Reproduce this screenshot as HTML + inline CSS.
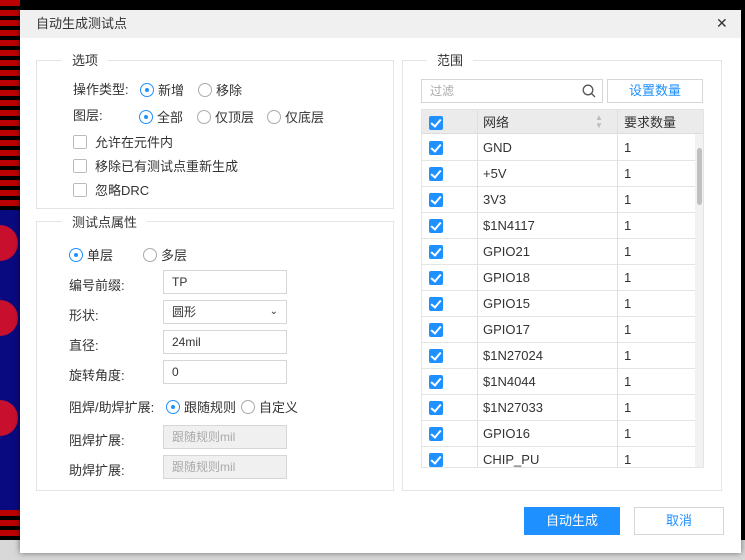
<!DOCTYPE html>
<html><head><meta charset="utf-8"><style>
*{box-sizing:border-box;margin:0;padding:0}
body{width:745px;height:560px;position:relative;overflow:hidden;background:#000;font-family:"Liberation Sans","Noto Sans CJK SC",sans-serif;font-size:13px;color:#333;line-height:15px}
.a{position:absolute}
.dlg{left:20px;top:10px;width:721px;height:543px;background:#fff;box-shadow:0 0 6px rgba(0,0,0,.5)}
.tb{left:0;top:0;width:721px;height:28px;background:#f0f0f0}
.grp{border:1px solid #e4e4e4}
.lg{background:#fff;padding:0 10px;font-size:13px}
.rd{width:14px;height:14px;border:1px solid #aaa;border-radius:50%;background:#fff}
.rd.on{border-color:#1e90ff}
.rd.on::after{content:"";position:absolute;left:4px;top:4px;width:4px;height:4px;border-radius:50%;background:#1e90ff}
.cb{width:14px;height:14px;border:1px solid #bbb;border-radius:2px;background:#fff}
.inp{border:1px solid #d6d6d6;height:24px;background:#fff;padding-left:8px;line-height:22px;font-size:12px}
.dis{background:#f0f0f0;color:#aaa}
.ck{width:14px;height:14px;background:#1e90ff;border-radius:2px}
.ck::after{content:"";position:absolute;left:4px;top:1px;width:4px;height:8px;border:solid #fff;border-width:0 2px 2px 0;transform:rotate(40deg)}
.row{left:0;width:273px;height:26px;border-bottom:1px solid #e4e4e4}
</style></head><body>
<div class="a" style="left:0;top:0;width:20px;height:560px;background:repeating-linear-gradient(180deg,#b00 0 6px,#000 6px 10px)"></div>
<div class="a" style="left:0;top:210px;width:20px;height:300px;background:#0a0a80"></div>
<div class="a" style="left:0;top:225px;width:18px;height:36px;border-radius:0 18px 18px 0;background:#c8102e"></div>
<div class="a" style="left:0;top:300px;width:18px;height:36px;border-radius:0 18px 18px 0;background:#c8102e"></div>
<div class="a" style="left:0;top:400px;width:18px;height:36px;border-radius:0 18px 18px 0;background:#c8102e"></div>
<div class="a" style="left:0;top:540px;width:745px;height:20px;background:#d8d8d8"></div>
<div class="a dlg">
 <div class="a tb"></div>
 <div class="a" style="left:16px;top:6px;font-size:13px">自动生成测试点</div>
 <div class="a" style="left:696px;top:6px;font-size:14px;color:#333">✕</div>

 <div class="a grp" style="left:16px;top:50px;width:358px;height:149px"></div>
 <div class="a lg" style="left:42px;top:43px">选项</div>
 <div class="a" style="left:53px;top:72px">操作类型:</div>
 <div class="a rd on" style="left:120px;top:73px"></div><div class="a" style="left:138px;top:73px">新增</div>
 <div class="a rd" style="left:178px;top:73px"></div><div class="a" style="left:196px;top:73px">移除</div>
 <div class="a" style="left:53px;top:98px">图层:</div>
 <div class="a rd on" style="left:119px;top:100px"></div><div class="a" style="left:137px;top:100px">全部</div>
 <div class="a rd" style="left:177px;top:100px"></div><div class="a" style="left:195px;top:100px">仅顶层</div>
 <div class="a rd" style="left:247px;top:100px"></div><div class="a" style="left:265px;top:100px">仅底层</div>
 <div class="a cb" style="left:53px;top:125px"></div><div class="a" style="left:75px;top:125px">允许在元件内</div>
 <div class="a cb" style="left:53px;top:149px"></div><div class="a" style="left:75px;top:149px">移除已有测试点重新生成</div>
 <div class="a cb" style="left:53px;top:173px"></div><div class="a" style="left:75px;top:173px">忽略DRC</div>

 <div class="a grp" style="left:16px;top:211px;width:358px;height:270px"></div>
 <div class="a lg" style="left:42px;top:205px">测试点属性</div>
 <div class="a rd on" style="left:49px;top:238px"></div><div class="a" style="left:67px;top:238px">单层</div>
 <div class="a rd" style="left:123px;top:238px"></div><div class="a" style="left:141px;top:238px">多层</div>
 <div class="a" style="left:49px;top:268px">编号前缀:</div><div class="a inp" style="left:143px;top:260px;width:124px">TP</div>
 <div class="a" style="left:49px;top:298px">形状:</div><div class="a inp" style="left:143px;top:290px;width:124px">圆形<span style="position:absolute;right:8px;top:0;font-size:10px">⌄</span></div>
 <div class="a" style="left:49px;top:328px">直径:</div><div class="a inp" style="left:143px;top:320px;width:124px">24mil</div>
 <div class="a" style="left:49px;top:358px">旋转角度:</div><div class="a inp" style="left:143px;top:350px;width:124px">0</div>
 <div class="a" style="left:49px;top:390px">阻焊/助焊扩展:</div>
 <div class="a rd on" style="left:146px;top:390px"></div><div class="a" style="left:164px;top:390px">跟随规则</div>
 <div class="a rd" style="left:221px;top:390px"></div><div class="a" style="left:239px;top:390px">自定义</div>
 <div class="a" style="left:49px;top:423px">阻焊扩展:</div><div class="a inp dis" style="left:143px;top:415px;width:124px">跟随规则mil</div>
 <div class="a" style="left:49px;top:453px">助焊扩展:</div><div class="a inp dis" style="left:143px;top:445px;width:124px">跟随规则mil</div>

 <div class="a grp" style="left:382px;top:50px;width:320px;height:431px"></div>
 <div class="a lg" style="left:407px;top:43px">范围</div>
 <div class="a inp" style="left:401px;top:69px;width:182px;color:#aaa;line-height:22px">过滤
  <svg class="a" style="right:6px;top:4px" width="14" height="14"><circle cx="6" cy="6" r="4.8" fill="none" stroke="#555" stroke-width="1.3"/><line x1="9.5" y1="9.5" x2="13" y2="13" stroke="#555" stroke-width="1.3"/></svg></div>
 <div class="a inp" style="left:587px;top:69px;width:96px;color:#1e90ff;text-align:center;padding:0;font-size:13px">设置数量</div>
 <div class="a" style="left:401px;top:99px;width:283px;height:359px;border:1px solid #e4e4e4;overflow:hidden">
  <div class="a" style="left:0;top:0;width:283px;height:24px;background:#ebebeb;border-bottom:1px solid #ddd"></div>
  <div class="a ck" style="left:7px;top:6px"></div>
  <div class="a" style="left:61px;top:5px">网络</div>
  <div class="a" style="left:173px;top:4px;font-size:8px;color:#bbb;line-height:8px">▲<br>▼</div>
  <div class="a" style="left:202px;top:5px">要求数量</div>
  <div id="rows"></div>
  <div class="a" style="left:55px;top:0;width:1px;height:359px;background:#e0e0e0"></div>
  <div class="a" style="left:195px;top:0;width:1px;height:359px;background:#e0e0e0"></div>
  <div class="a" style="left:273px;top:24px;width:10px;height:335px;background:#f2f2f2"></div>
  <div class="a" style="left:275px;top:38px;width:5px;height:57px;background:#c0c0c0;border-radius:3px"></div>
 </div>
 <div class="a" style="left:504px;top:497px;width:96px;height:28px;background:#1e90ff;color:#fff;text-align:center;line-height:28px">自动生成</div>
 <div class="a" style="left:614px;top:497px;width:90px;height:28px;border:1px solid #d6d6d6;color:#1e90ff;text-align:center;line-height:26px">取消</div>
</div>
<script>
var n=["GND","+5V","3V3","$1N4117","GPIO21","GPIO18","GPIO15","GPIO17","$1N27024","$1N4044","$1N27033","GPIO16","CHIP_PU"],h="";
n.forEach(function(s,i){var t=25+i*26;h+='<div class="a row" style="top:'+t+'px"></div><div class="a ck" style="left:7px;top:'+(t+6)+'px"></div><div class="a" style="left:61px;top:'+(t+5)+'px">'+s+'</div><div class="a" style="left:202px;top:'+(t+5)+'px">1</div>';});
document.getElementById("rows").outerHTML=h;
</script>
</body></html>
